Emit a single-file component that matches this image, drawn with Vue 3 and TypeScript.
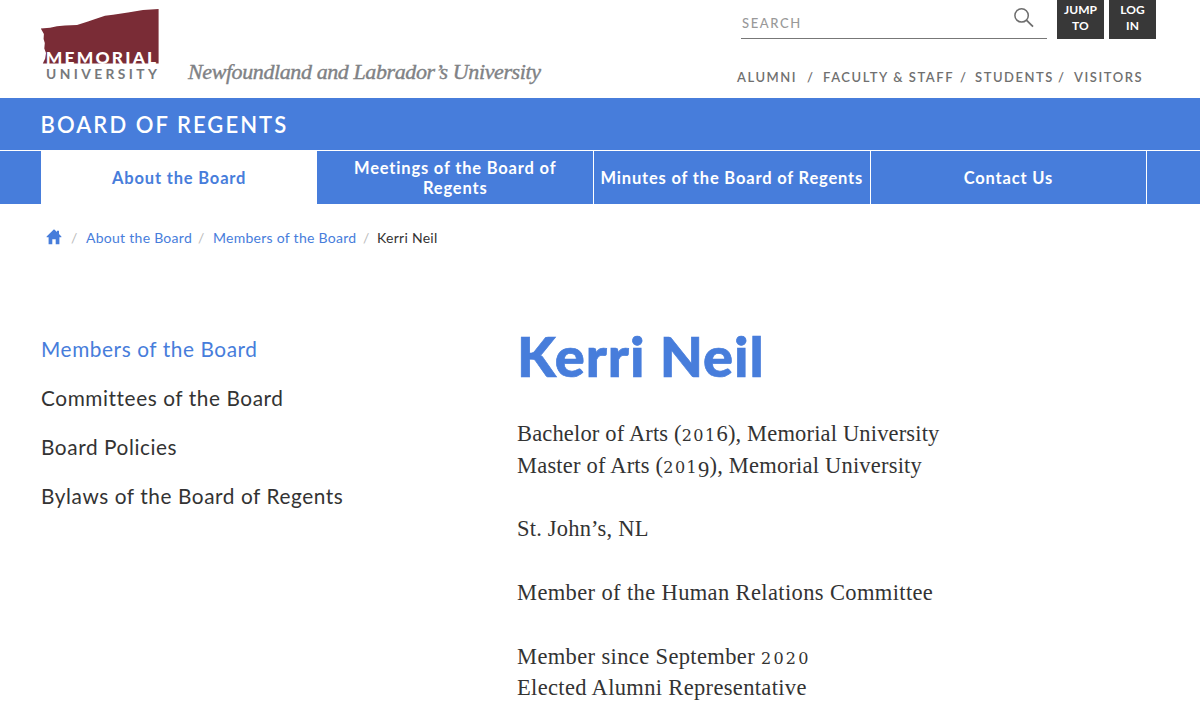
<script setup lang="ts">
interface Tab { label: string; active?: boolean; key: string }
interface Glyph { ch: string; kind: string }
interface BioLine { text: string; key: string }

const tabs: Tab[] = [
  { label: 'About the Board', active: true, key: 'about' },
  { label: 'Meetings of the Board of Regents', key: 'meetings' },
  { label: 'Minutes of the Board of Regents', key: 'minutes' },
  { label: 'Contact Us', key: 'contact' },
]

const sideLinks: Tab[] = [
  { label: 'Members of the Board', active: true, key: 'members' },
  { label: 'Committees of the Board', key: 'committees' },
  { label: 'Board Policies', key: 'policies' },
  { label: 'Bylaws of the Board of Regents', key: 'bylaws' },
]

const bio: BioLine[][] = [
  [
    { text: 'Bachelor of Arts (2016), Memorial University', key: 'bachelor' },
    { text: 'Master of Arts (2019), Memorial University', key: 'master' },
  ],
  [{ text: 'St. John’s, NL', key: 'place' }],
  [{ text: 'Member of the Human Relations Committee', key: 'committee' }],
  [
    { text: 'Member since September 2020', key: 'since' },
    { text: 'Elected Alumni Representative', key: 'elected' },
  ],
]

// Splits a line into runs so that digits can be set as old-style figures.
function runs(text: string): Glyph[] {
  return (text.match(/[012]+|[3-579]|[^0-9]+|[68]/g) ?? []).map((ch) => ({
    ch,
    kind: /^[012]/.test(ch) ? 'low' : /^[34579]/.test(ch) ? 'drop' : 'plain',
  }))
}
</script>

<template>
  <div class="page">
    <header class="top">
      <div class="brand">
        <svg class="logo" width="120" height="76" viewBox="40 6 120 76">
          <path d="M40.8 28.6 L50 27.8 L57 26.3 L65 25.4 L77 25 L88 21.6 L96 18.8 L105 15.7 L113 14.8 L128 12.4 L143 9.9 L158.6 9.1 V63.6 H42.8 L45.2 58.5 L46 53 L44.3 48.5 L44.8 43 L43.6 39 L43.9 34 Z" fill="#7a2c36" />
          <text x="45.8" y="63.7" textLength="112.6" lengthAdjust="spacingAndGlyphs" class="logo-a">MEMORIAL</text>
          <text x="46" y="78.8" textLength="111" class="logo-b">UNIVERSITY</text>
        </svg>
        <div class="tagline">Newfoundland and Labrador’s University</div>
      </div>
      <div class="tools">
        <div class="tool-row">
          <div class="search">
            <span class="search-label">SEARCH</span>
            <svg class="glass" width="22" height="22" viewBox="0 0 22 22" fill="none" stroke="#6d6d6d" stroke-width="1.5">
              <circle cx="8.6" cy="8.4" r="6.7" />
              <path d="M13.4 13.2 L20 19.6" stroke-width="1.8" />
            </svg>
          </div>
          <button class="dark">JUMP<br>TO</button>
          <button class="dark">LOG<br>IN</button>
        </div>
        <nav class="quick">
          <a class="q1">ALUMNI</a><i>/</i>
          <a class="q2">FACULTY &amp; STAFF</a><i>/</i>
          <a class="q3">STUDENTS</a><i>/</i>
          <a class="q4">VISITORS</a>
        </nav>
      </div>
    </header>

    <div class="title-bar"><span>BOARD OF REGENTS</span></div>

    <nav class="tabs">
      <a v-for="t in tabs" :key="t.key" class="tab" :class="[{ active: t.active }, t.key]"><span>{{ t.label }}</span></a>
    </nav>

    <nav class="crumbs">
      <svg width="16" height="16" viewBox="0 0 16 16"><path d="M8 .2 L11 3.1 V1.8 H13 V5 L15.4 7.5 V8.3 H13.4 V15.2 H9.7 V10.2 H6.3 V15.2 H2.6 V8.3 H.6 V7.5 Z" fill="#477ddb" /></svg>
      <i>/</i>
      <a class="c1">About the Board</a><i>/</i>
      <a class="c2">Members of the Board</a><i>/</i>
      <span class="c3">Kerri Neil</span>
    </nav>

    <div class="body">
      <aside class="side">
        <a v-for="s in sideLinks" :key="s.key" :class="[{ current: s.active }, s.key]">{{ s.label }}</a>
      </aside>
      <main class="main">
        <h1><span>Kerri Neil</span></h1>
        <p v-for="(group, g) in bio" :key="g">
          <span v-for="line in group" :key="line.key" class="line" :class="line.key"><span v-for="(r, i) in runs(line.text)" :key="i" :class="r.kind">{{ r.ch }}</span></span>
        </p>
      </main>
    </div>
  </div>
</template>

<style>
html, body { background: #fff; overflow: hidden; }
</style>

<style scoped>
.page {
  width: 1200px;
  height: 715px;
  overflow: hidden;
  font-family: Lato, "Open Sans", sans-serif;
  color: #333;
  white-space: nowrap;
}
.page * { box-sizing: border-box; }
i { font-style: normal; }

.top { height: 98px; display: flex; justify-content: space-between; padding: 0 44px 0 40px; }
.brand { display: flex; }
.logo { margin-top: 6px; display: block; }
.logo-a { font: 900 16px Lato, sans-serif; fill: #fff; letter-spacing: 2px; }
.logo-b { font: 700 13.8px Lato, sans-serif; fill: #77797c; }
.tagline {
  margin: 58px 0 0 28px;
  font: italic 22px/28px "Liberation Serif", serif;
  letter-spacing: -0.4px;
  color: #808285;
  -webkit-text-stroke: 0.4px #808285;
}

.tools { width: 419px; }
.tool-row { display: flex; padding-left: 4px; height: 39px; }
.search {
  flex: none;
  width: 306px;
  height: 39px;
  margin-right: 10px;
  border-bottom: 1.5px solid #777;
  display: flex;
  justify-content: space-between;
  padding: 0 12px 0 1px;
}
.search-label { font-size: 13px; line-height: 16px; margin-top: 15px; letter-spacing: 1.6px; color: #999; font-weight: 500; }
.glass { margin-top: 7px; }
.dark {
  flex: none;
  width: 47px;
  height: 39px;
  margin: 0 5px 0 0;
  padding: 0 0 3px;
  border: 0;
  background: #383838;
  color: #fff;
  font: 700 12px/16px Lato, sans-serif;
  letter-spacing: 0.1px;
}
.dark:last-child { margin-right: 0; }
.quick {
  margin-top: 29px;
  display: grid;
  grid-template-columns: 70px 16px 137px 15px 83px 16px auto;
  font-size: 13px;
  line-height: 18px;
  font-weight: 600;
  letter-spacing: 1.55px;
  color: #707070;
}

.title-bar {
  height: 52px;
  background: #477ddb;
  color: #fff;
  padding-left: 40.5px;
  font-size: 22px;
  line-height: 53px;
  font-weight: 600;
  letter-spacing: 2.05px;
}
.tabs {
  border-top: 1px solid #fff;
  height: 54px;
  background: #477ddb;
  padding-left: 41px;
  display: flex;
}
.tab {
  flex: none;
  width: 276.6px;
  border-right: 1px solid #fff;
  color: #fff;
  font-size: 16.5px;
  line-height: 20px;
  font-weight: 700;
  letter-spacing: 0.82px;
  text-align: center;
  display: flex;
  align-items: center;
  justify-content: center;
}
.tab.active { background: #fff; color: #477ddb; border-right: 0; width: 276.4px; }
.tab.meetings { white-space: normal; padding: 0 30px; }

.crumbs {
  margin-top: 24px;
  padding-left: 46px;
  height: 20px;
  display: grid;
  grid-template-columns: 25px 15px 112px 15px 150px 14px auto;
  font-size: 14px;
  line-height: 20px;
  letter-spacing: 0.27px;
}
.crumbs svg { margin-top: 1px; }
.crumbs a { color: #477ddb; }
.crumbs i { color: #bbb; }

.body { display: flex; padding-left: 41px; }
.side { width: 476px; padding-top: 76px; display: flex; flex-direction: column; }
.side a { height: 49px; line-height: 49px; font-size: 20.8px; letter-spacing: 0.58px; }
.side .current { color: #477ddb; }

.main { padding-top: 74px; color: #333; }
h1 { margin: 0 0 28px; font-size: 56px; line-height: 68px; font-weight: 900; color: #477ddb; letter-spacing: 0.95px; -webkit-text-stroke: 0.7px #477ddb; }
p { margin: 0 0 31.8px; font: 22.5px/31.8px "Liberation Serif", serif; letter-spacing: 0.37px; }
.line { display: block; height: 31.8px; }
.bachelor { letter-spacing: 0.16px; }
.master { letter-spacing: 0.2px; }
.place { letter-spacing: 0.2px; }
.elected { letter-spacing: 0.34px; }
.low { font-family: "DejaVu Serif", serif; font-size: 16px; line-height: 1; letter-spacing: 1.4px; }
.since .low { letter-spacing: 2.2px; }
.drop { position: relative; top: 4px; }
</style>
